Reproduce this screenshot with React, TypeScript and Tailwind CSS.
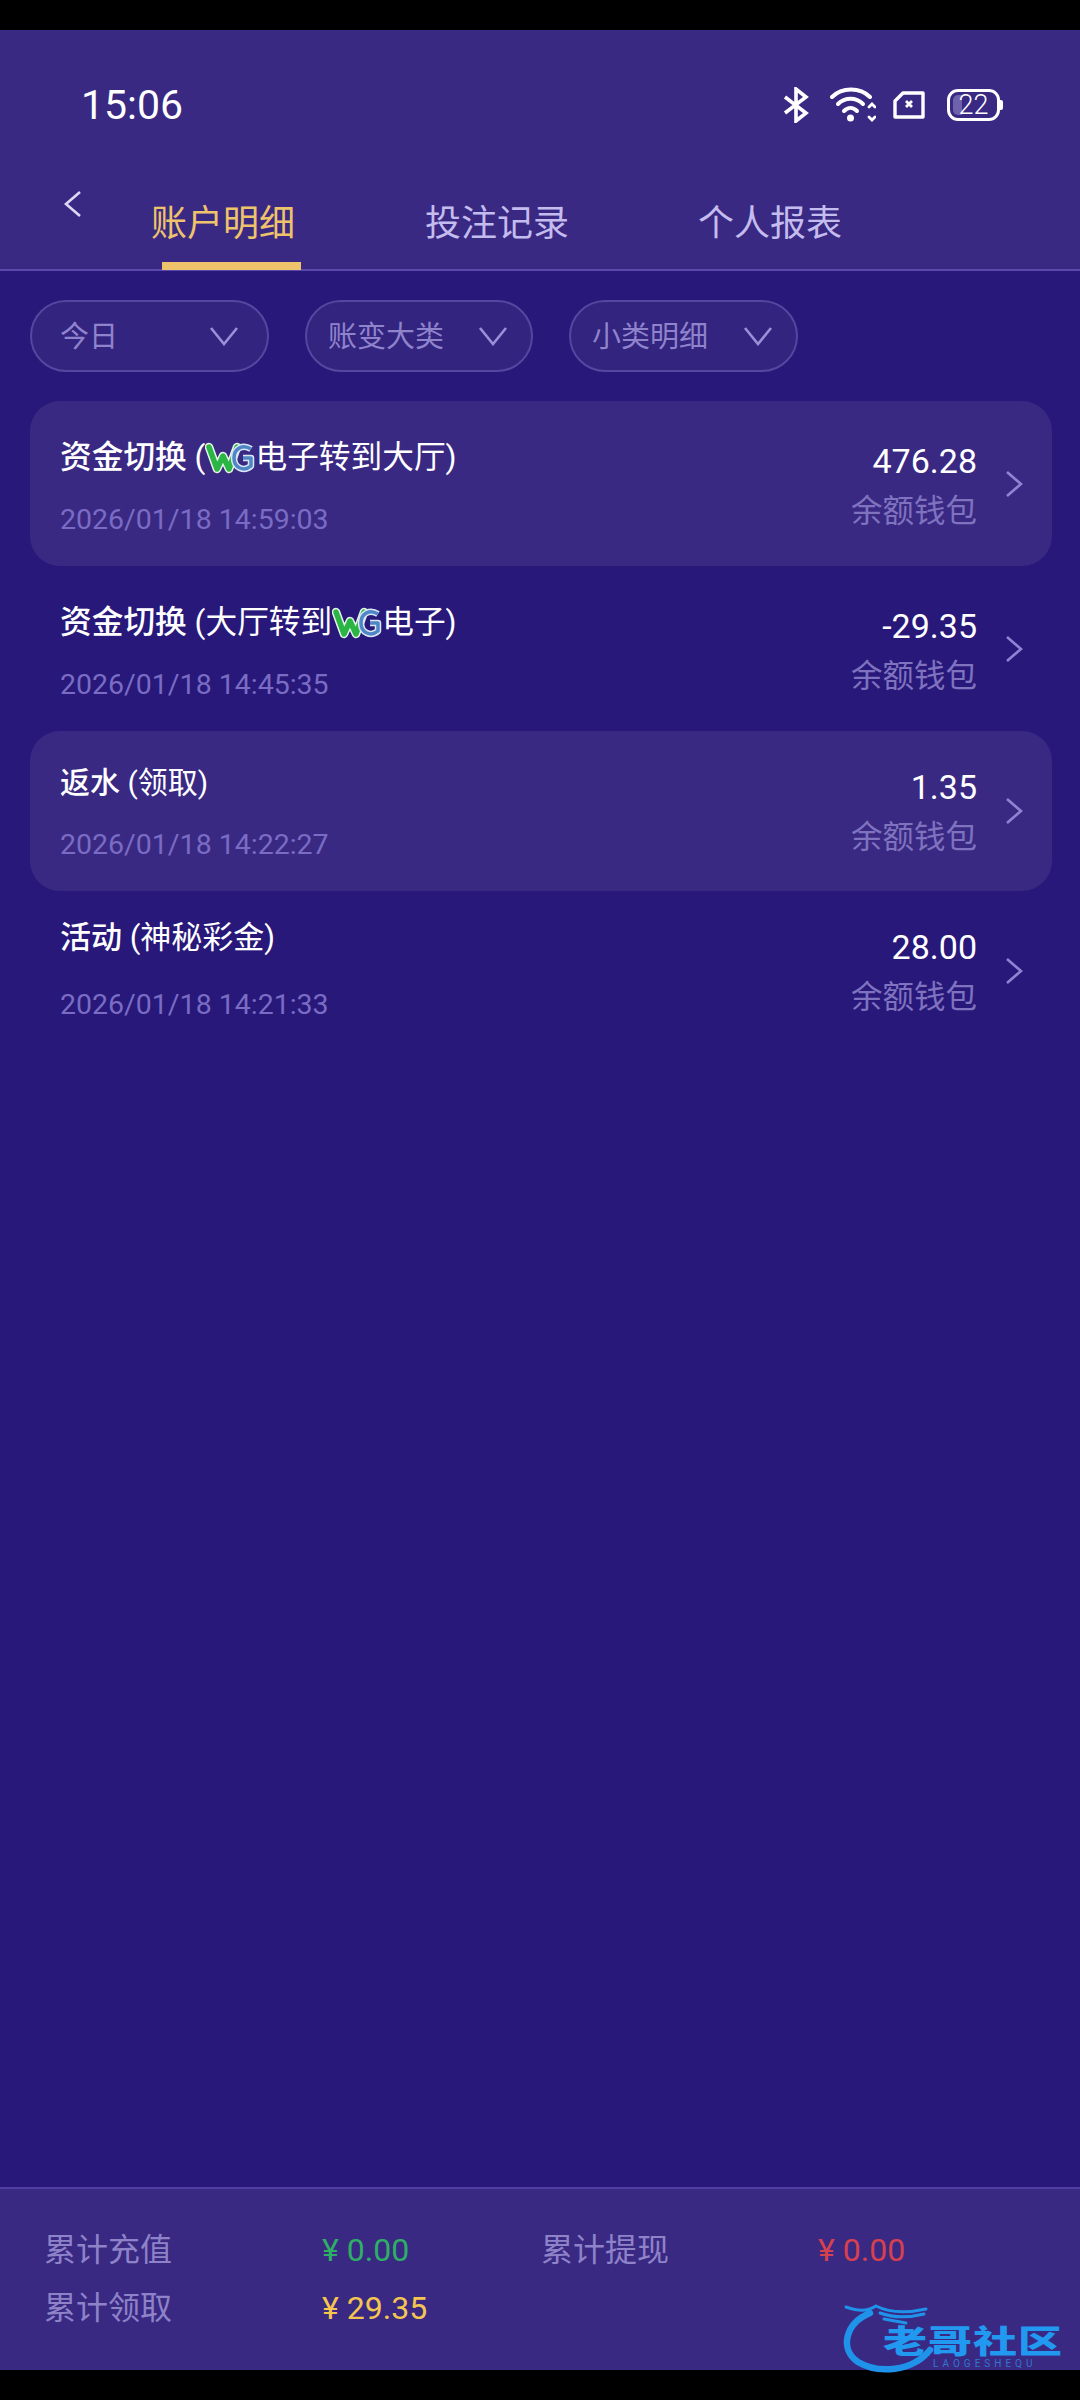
function WgLogo() {
    return <svg width="50" height="32" viewBox="0 0 50 32" className="shrink-0" fill="none">
        <path d="M4 5 L12 27 L18 14 L24 27 L32 5" stroke="#e8f6ea" strokeWidth="8.5" strokeLinejoin="round" strokeLinecap="round"/>
        <path d="M4 5 L12 27 L18 14 L24 27 L32 5" stroke="#2bb544" strokeWidth="5.5" strokeLinejoin="round" strokeLinecap="round"/>
        <path d="M46 7 C38 2 29 6 29 16 C29 26 39 30 46 24 L46 16 L38 16" stroke="#dbe6f5" strokeWidth="6.5" strokeLinejoin="round"/>
        <path d="M46 7 C38 2 29 6 29 16 C29 26 39 30 46 24 L46 16 L38 16" stroke="#4f86c6" strokeWidth="3.5" strokeLinejoin="round"/>
    </svg>
}

function StatusIcons() {
    return <div className="flex items-center text-white">
        <svg width="26" height="36" viewBox="0 0 26 36" fill="none" stroke="currentColor" strokeWidth="3.6">
            <path d="M2 10 L23 26 L13 34 L13 2 L23 10 L2 26"/>
        </svg>
        <svg width="46" height="36" viewBox="0 0 46 36" fill="none" stroke="currentColor" strokeWidth="4" className="ml-[21px]" strokeLinecap="round">
            <path d="M2 10 C12 0 30 0 40 10"/>
            <path d="M8 17 C15 10 26 10 33 17"/>
            <path d="M14 24 C18 20 23 20 27 24"/>
            <circle cx="20.5" cy="31" r="3.5" fill="currentColor" stroke="none"/>
            <path d="M39 20 L42 17 L45 20 M39 30 L42 33 L45 30" strokeWidth="2.8"/>
        </svg>
        <svg width="34" height="30" viewBox="0 0 34 30" fill="none" stroke="currentColor" strokeWidth="3.4" className="ml-[16px]">
            <path d="M11 3 L31 3 L31 27 L3 27 L3 11 Z" strokeLinejoin="round"/>
            <path d="M14 11 L20 17 M20 11 L14 17" strokeWidth="2.8"/>
        </svg>
        <div className="relative ml-[21px] flex h-[32px] w-[53px] items-center justify-center rounded-[11px] border-[3px] border-white text-[27px] leading-none font-light">
            <div className="absolute left-[3px] top-[3px] bottom-[3px] w-[9px] rounded-l-[5px] bg-[#6e62ad]"/>
            <span className="relative">22</span>
            <div className="absolute right-[-6px] top-[8px] h-[10px] w-[3px] rounded-r-[2px] bg-white"/>
        </div>
    </div>
}

function Chevron({className}: {className: string}) {
    return <svg width="18" height="28" viewBox="0 0 18 28" fill="none" stroke="currentColor" strokeWidth="2.6" className={className}>
        <path d="M2 2 L16 14 L2 26"/>
    </svg>
}

function Filter({label, box}: {label: string, box: string}) {
    return <div className={`flex h-[72px] items-center justify-between rounded-[36px] border-2 border-[#55469f] bg-[#33247f] text-[29px] text-[#8f83cc] ${box}`}>
        <span className="pt-[3px]">{label}</span>
        <svg width="30" height="20" viewBox="0 0 30 20" fill="none" stroke="#9a8fd8" strokeWidth="2.6">
            <path d="M2 2 L15 18 L28 2"/>
        </svg>
    </div>
}

function Row({item}: {item: typeof rows[number]}) {
    return <div className={`flex justify-between rounded-[30px] pl-[30px] pr-[29px] ${item.box}`}>
        <div>
            <div className={`flex h-[40px] items-center text-white whitespace-nowrap ${item.titleSize}`}>{item.title}</div>
            <div className={`text-[28.5px] leading-[36px] text-[#7a6cc4] ${item.dateGap}`}>{item.date}</div>
        </div>
        <div className="flex items-start">
            <div className={`flex flex-col items-end ${item.amountTop}`}>
                <div className="text-[34px] leading-[40px] text-white">{item.amount}</div>
                <div className="text-[31.5px] leading-[40px] text-[#7f72bf] mt-[11px]">余额钱包</div>
            </div>
            <Chevron className={`ml-[28px] text-[#8f83d2] ${item.chevronTop}`}/>
        </div>
    </div>
}

const rows = [
    {
        box: "h-[165px] pt-[37px] bg-[#392983]",
        titleSize: "text-[31.7px]",
        dateGap: "mt-[24px]",
        amountTop: "mt-[3px]",
        chevronTop: "mt-[32px]",
        title: <><span className="font-medium">资金切换</span>&nbsp;(<WgLogo/>电子转到大厅)</>,
        date: "2026/01/18 14:59:03",
        amount: "476.28"
    },
    {
        box: "h-[165px] pt-[37px]",
        titleSize: "text-[31.7px]",
        dateGap: "mt-[24px]",
        amountTop: "mt-[3px]",
        chevronTop: "mt-[32px]",
        title: <><span className="font-medium">资金切换</span>&nbsp;(大厅转到<WgLogo/>电子)</>,
        date: "2026/01/18 14:45:35",
        amount: "-29.35"
    },
    {
        box: "h-[160px] pt-[31px] bg-[#392983]",
        titleSize: "text-[30px]",
        dateGap: "mt-[25px]",
        amountTop: "mt-[5px]",
        chevronTop: "mt-[35px]",
        title: <><span className="font-medium">返水</span>&nbsp;(领取)</>,
        date: "2026/01/18 14:22:27",
        amount: "1.35"
    },
    {
        box: "h-[160px] pt-[27px]",
        titleSize: "text-[31px]",
        dateGap: "mt-[29px]",
        amountTop: "mt-[9px]",
        chevronTop: "mt-[39px]",
        title: <><span className="font-medium">活动</span>&nbsp;(神秘彩金)</>,
        date: "2026/01/18 14:21:33",
        amount: "28.00"
    },
]

function Watermark() {
    return <div className="absolute bottom-[-6px] right-0 h-[76px] w-[240px]">
        <svg width="110" height="76" viewBox="0 0 110 76" fill="none" className="absolute left-0 top-0">
            <path d="M30 13 C4 24 0 50 18 62 C38 74 72 72 90 50" stroke="#1f93ea" strokeWidth="6.5" strokeLinecap="round"/>
            <path d="M6 7 C18 11 26 12 36 6 C48 12 64 14 86 9 M40 13 C54 18 68 18 84 14 M44 19 L66 23" stroke="#1f93ea" strokeWidth="3" strokeLinecap="round"/>
        </svg>
        <div className="absolute left-[43px] top-[16px] origin-center scale-y-[0.72] text-[44px] leading-[52px] font-black tracking-[1px] text-[#2199f0] whitespace-nowrap">老哥社区</div>
        <div className="absolute left-[93px] top-[58px] text-[10px] leading-[12px] tracking-[4px] text-[#2f78cc] whitespace-nowrap">LAOGESHEQU</div>
    </div>
}

export default function App() {
    return <div className="flex h-[2400px] w-[1080px] flex-col bg-black font-['Roboto','Noto_Sans_CJK_SC',sans-serif]">
        <div className="h-[30px] shrink-0"/>
        <header className="h-[241px] shrink-0 border-b-2 border-[#5a49ac] bg-[#392983]">
            <div className="flex h-[105px] items-center justify-between pt-[45px] pl-[81px] pr-[80px]">
                <span className="text-[41px] leading-[48px] text-white">15:06</span>
                <StatusIcons/>
            </div>
            <div className="flex h-[134px]">
                <Chevron className="ml-[64px] mt-[55px] rotate-180 text-[#ddd8f5]"/>
                <div className="ml-[69px] flex text-[36px] text-[#c4bcee]">
                    <div className="relative mr-[130px] mt-[62px] text-[#efc36b]">
                        账户明细
                        <div className="absolute left-[11px] top-[65px] h-[8px] w-[139px] bg-[#efc36b]"/>
                    </div>
                    <div className="mr-[129px] mt-[62px]">投注记录</div>
                    <div className="mt-[62px]">个人报表</div>
                </div>
            </div>
        </header>
        <main className="flex-1 bg-[#27187a] px-[30px] pt-[29px]">
            <div className="flex gap-[36px]">
                <Filter label="今日" box="w-[239px] pl-[28px] pr-[28px]"/>
                <Filter label="账变大类" box="w-[228px] pl-[21px] pr-[23px]"/>
                <Filter label="小类明细" box="w-[229px] pl-[21px] pr-[23px]"/>
            </div>
            <div className="mt-[29px] w-[1022px]">
                {rows.map(item => <Row key={item.date} item={item}/>)}
            </div>
        </main>
        <footer className="relative h-[183px] shrink-0 border-t-2 border-[#4f3fa3] bg-[#392983] pl-[44px] pt-[32px] text-[32px] leading-[58px]">
            <div className="grid grid-cols-[278px_219px_277px_1fr]">
                <div className="text-[#8e82c8]">累计充值</div>
                <div className="text-[#2fae66]">¥ 0.00</div>
                <div className="text-[#8e82c8]">累计提现</div>
                <div className="text-[#d6404f]">¥ 0.00</div>
                <div className="text-[#8e82c8]">累计领取</div>
                <div className="text-[#f5c64f]">¥ 29.35</div>
            </div>
            <Watermark/>
        </footer>
        <div className="h-[30px] shrink-0"/>
    </div>
}
